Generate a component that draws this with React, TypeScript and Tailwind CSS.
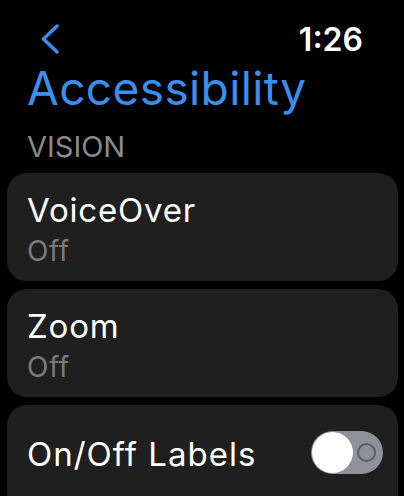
import React from "react";

export default function App() {
  return (
    <div
      className="w-[404px] h-[496px] bg-black overflow-hidden"
      style={{ fontFamily: "Inter, 'Noto Sans', sans-serif" }}
    >
      <div className="mt-[24px] h-[32px] flex items-start justify-between pl-[41px] pr-[41px]">
        <svg width="18" height="30" viewBox="0 0 18 30" fill="none">
          <polyline
            points="16,2 2.5,15 16,28"
            stroke="#3a8fee"
            strokeWidth="3.4"
            strokeLinecap="round"
            strokeLinejoin="round"
          />
        </svg>
        <div className="text-[32px] leading-[32px] font-semibold text-white">1:26</div>
      </div>
      <div className="mt-[7px] pl-[27px] text-[46px] leading-[50px] tracking-[0.4px] text-[#3a8fee]">
        Accessibility
      </div>
      <div className="mt-[17px] pl-[27px] text-[29px] leading-[34px] text-[#8a8a8e]">
        VISION
      </div>
      <div className="mt-[9px] pl-[7px] pr-[6px] flex flex-col gap-[8px]">
        <div className="h-[108px] rounded-[20px] bg-[#1f1f1f] pl-[20px] pt-[17px]">
          <div className="text-[33px] leading-[40px] tracking-[0.8px] text-white">VoiceOver</div>
          <div className="mt-[4px] text-[28px] leading-[34px] tracking-[0.5px] text-[#7b7b7e]">Off</div>
        </div>
        <div className="h-[108px] rounded-[20px] bg-[#1f1f1f] pl-[20px] pt-[17px]">
          <div className="text-[33px] leading-[40px] tracking-[0.8px] text-white">Zoom</div>
          <div className="mt-[4px] text-[28px] leading-[34px] tracking-[0.5px] text-[#7b7b7e]">Off</div>
        </div>
        <div className="h-[108px] rounded-[20px] bg-[#1f1f1f] pl-[20px] pr-[15px] pt-[26px]">
          <div className="flex items-center justify-between h-[43px]">
            <div className="text-[33px] leading-[40px] tracking-[1px] text-white mt-[3px]">On/Off Labels</div>
            <div className="relative w-[72px] h-[43px] rounded-full bg-[#8f9099]">
              <div className="absolute left-[1px] top-[1px] w-[41px] h-[41px] rounded-full bg-white" />
              <div className="absolute right-[7px] top-[12px] w-[19px] h-[19px] rounded-full border-[2.5px] border-[#5d5e64]" />
            </div>
          </div>
        </div>
      </div>
    </div>
  );
}
